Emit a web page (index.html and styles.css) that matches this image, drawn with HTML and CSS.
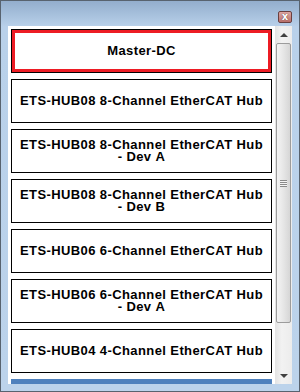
FILE: index.html
```html
<!DOCTYPE html>
<html lang="en">

<head>
    <meta charset="UTF-8">
    <meta name="viewport" content="width=device-width, initial-scale=1.0">
    <title>Devices</title>
    <link rel="stylesheet" href="styles.css">
</head>

<body>
    <div class="window">
        <div class="titlebar">
            <div class="close-btn"><span>x</span></div>
        </div>
        <div class="client">
            <div class="device-list">
                <div class="device selected">Master-DC</div>
                <div class="device">ETS-HUB08 8-Channel EtherCAT Hub</div>
                <div class="device">ETS-HUB08 8-Channel EtherCAT Hub -&nbsp;Dev&nbsp;A</div>
                <div class="device">ETS-HUB08 8-Channel EtherCAT Hub -&nbsp;Dev&nbsp;B</div>
                <div class="device">ETS-HUB06 6-Channel EtherCAT Hub</div>
                <div class="device">ETS-HUB06 6-Channel EtherCAT Hub -&nbsp;Dev&nbsp;A</div>
                <div class="device">ETS-HUB04 4-Channel EtherCAT Hub</div>
                <div class="device next"></div>
            </div>
            <div class="scrollbar">
                <div class="arrow up"></div>
                <div class="track">
                    <div class="thumb"><div class="grip"></div></div>
                </div>
                <div class="arrow down"></div>
            </div>
        </div>
    </div>
</body>

</html>
```

FILE: styles.css
```css
body {
    margin: 0;
    font-family: "Liberation Sans", Arial, sans-serif;
}

.window {
    width: 300px;
    height: 392px;
    box-sizing: border-box;
    border: 1px solid #58636f;
    background: linear-gradient(#93aecd, #b9d1ea 26px, #bcd3eb);
    display: flex;
    flex-direction: column;
}

.titlebar {
    height: 25px;
    display: flex;
    justify-content: flex-end;
    align-items: flex-start;
    padding-right: 7px;
}

.close-btn {
    margin-top: 10px;
    width: 14px;
    height: 12px;
    box-sizing: border-box;
    border: 1px solid #6a3f3f;
    border-radius: 2px;
    background: linear-gradient(#dba6a2, #b9706b);
    display: flex;
    align-items: center;
    justify-content: center;
}

.close-btn span {
    color: #fff;
    font-family: "DejaVu Sans", sans-serif;
    font-weight: bold;
    font-size: 10px;
    line-height: 10px;
    text-shadow: 0 0 1px #4a2020;
}

.client {
    flex: 1;
    margin: 0 7px 7px 7px;
    background: #fff;
    display: flex;
    overflow: hidden;
}

.device-list {
    flex: 1;
    padding: 3px 3px 0 3px;
    display: flex;
    flex-direction: column;
    gap: 6px;
    overflow: hidden;
}

.device {
    flex-shrink: 0;
    height: 44px;
    box-sizing: border-box;
    border: 1px solid #000;
    padding: 0 4px;
    display: flex;
    align-items: center;
    justify-content: center;
    text-align: center;
    font-weight: bold;
    font-size: 13px;
    letter-spacing: 0.4px;
    line-height: 12px;
    color: #000;
}

.device.selected {
    box-shadow: inset 0 0 0 3px #ed1c24;
}

.device.next {
    border: none;
    background: #4f81bd;
}

.scrollbar {
    width: 17px;
    display: flex;
    flex-direction: column;
    background: linear-gradient(to right, #e3e3e3, #f2f2f2 40%, #ececec);
}

.arrow {
    height: 17px;
    display: flex;
    align-items: center;
    justify-content: center;
}

.arrow::before {
    content: "";
    border-left: 4px solid transparent;
    border-right: 4px solid transparent;
}

.arrow.up::before {
    border-bottom: 4px solid #404040;
}

.arrow.down::before {
    border-top: 4px solid #404040;
}

.track {
    flex: 1;
    display: flex;
    flex-direction: column;
}

.thumb {
    height: 280px;
    box-sizing: border-box;
    margin: 0 1px;
    border: 1px solid #9c9c9c;
    border-radius: 2px;
    background: linear-gradient(to right, #f4f4f4, #e6e6e6 50%, #d6d6d6);
    display: flex;
    align-items: center;
    justify-content: center;
}

.grip {
    width: 7px;
    height: 7px;
    background: repeating-linear-gradient(#8a8a8a 0, #8a8a8a 1px, #f4f4f4 1px, #f4f4f4 2px);
}
```
